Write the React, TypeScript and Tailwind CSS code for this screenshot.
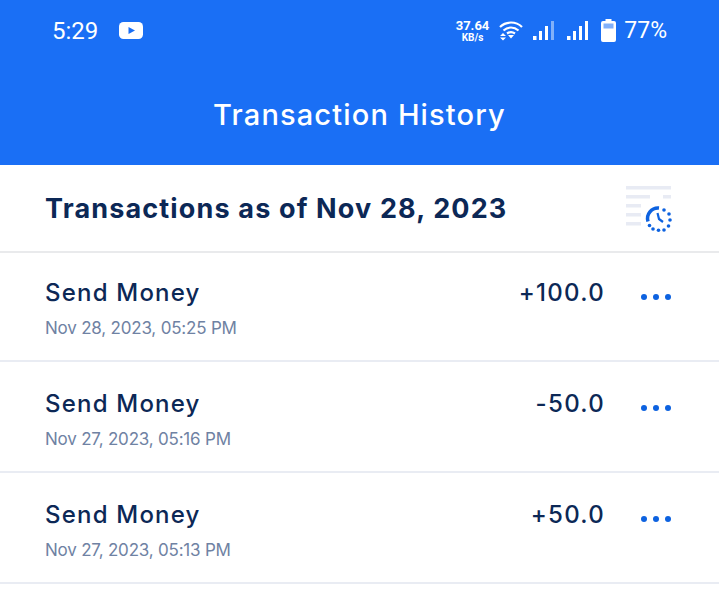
import clsx from "clsx";

const rows = [
  { date: "Nov 28, 2023, 05:25 PM", amount: "+100.0" },
  { date: "Nov 27, 2023, 05:16 PM", amount: "-50.0" },
  { date: "Nov 27, 2023, 05:13 PM", amount: "+50.0" },
];

function Signal({ dim }: { dim?: boolean }) {
  return (
    <svg width="22" height="20" viewBox="0 0 22 20" fill="#fff">
      <rect x="0" y="15" width="3.500" height="4" />
      <rect x="6" y="10" width="3" height="9" />
      <rect x="12" y="5" width="3" height="14" />
      <rect x="18" y="0" width="3" height="19" opacity={dim ? 0.45 : 1} />
    </svg>
  );
}

function Wifi() {
  return (
    <svg width="24" height="20" viewBox="0 0 24 20" fill="none" stroke="#fff" strokeWidth="2.200">
      <path d="M1 6 C7 0 17 0 23 6" />
      <path d="M4.500 9.500 C9 5.500 15 5.500 19.500 9.500" />
      <path d="M8 12.500 C10.500 10.800 13.500 10.800 16 12.500" />
      <path d="M1 15 L4 12 L7 15 Z M1 16.500 L4 19.500 L7 16.500 Z" fill="#fff" stroke="none" />
      <path d="M9 14 L12 17.500 L15 14 Z" fill="#fff" stroke="none" />
    </svg>
  );
}

function HistoryIcon() {
  return (
    <svg width="48" height="48" viewBox="0 0 48 48" className="shrink-0">
      <g fill="#e8ebf4">
        <rect x="2" y="2" width="45" height="3.500" />
        <rect x="2" y="11" width="24" height="3.500" />
        <rect x="39" y="11" width="8" height="3.500" />
        <rect x="2" y="20" width="15" height="3.500" />
        <rect x="2" y="29" width="15" height="3.500" />
        <rect x="2" y="38" width="15" height="3.500" />
      </g>
      <path d="M24 37.500 A10.500 10.500 0 0 1 35 24" fill="none" stroke="#0d62e0" strokeWidth="3.500" />
      <path d="M33.500 29 L35 35 L39 38" fill="none" stroke="#0d62e0" strokeWidth="2.200" />
      <g fill="#0d62e0">
        <circle cx="40" cy="26" r="1.800" />
        <circle cx="45" cy="30" r="1.800" />
        <circle cx="46" cy="36" r="1.800" />
        <circle cx="44.500" cy="42" r="1.800" />
        <circle cx="40" cy="46" r="1.800" />
        <circle cx="34.500" cy="46.200" r="1.800" />
        <circle cx="29" cy="45" r="1.800" />
        <circle cx="25.500" cy="41.500" r="1.800" />
      </g>
    </svg>
  );
}

export default function App() {
  return (
    <div className="h-[592px] w-[719px] overflow-hidden bg-white font-['Inter','Noto_Sans',sans-serif]">
      <header className="h-[165px] bg-[#1a6ff5] text-white">
        <div className="flex h-[61px] items-center justify-between pl-[52px] pr-[52px]">
          <div className="flex items-center gap-[21px]">
            <span className="font-['Roboto',sans-serif] text-[24px] leading-none">5:29</span>
            <svg width="24" height="17" viewBox="0 0 24 17">
              <rect width="24" height="17" rx="4.500" fill="#fff" />
              <path d="M9.500 5 L16 8.500 L9.500 12 Z" fill="#1a6ff5" />
            </svg>
          </div>
          <div className="flex items-center gap-[10px] font-['Roboto',sans-serif]">
            <div className="flex flex-col items-center text-[13px] font-bold leading-[14px]">
              <span>37.64</span>
              <span className="text-[10px] leading-[10px]">KB/s</span>
            </div>
            <Wifi />
            <div className="flex items-center gap-3">
              <Signal dim />
              <Signal />
            </div>
            <div className="ml-[2px] flex items-center gap-[8px]">
              <svg width="15" height="23" viewBox="0 0 15 23" fill="#fff">
                <path d="M4.500 0 H10.500 V2 H13 a2 2 0 0 1 2 2 V21 a2 2 0 0 1 -2 2 H2 a2 2 0 0 1 -2 -2 V4 a2 2 0 0 1 2 -2 H4.500 Z" />
                <rect x="2.500" y="4.500" width="10" height="5" fill="#1a6ff5" opacity="0.55" />
              </svg>
              <span className="text-[23px] leading-none">77%</span>
            </div>
          </div>
        </div>
        <h1 className="mt-[34px] text-center text-[29px] font-medium leading-[40px] tracking-[1.15px]">
          Transaction History
        </h1>
      </header>

      <div className="flex h-[88px] items-center justify-between border-b-2 border-[#e9eaec] pl-[45px] pr-[47px]">
        <h2 className="mt-[3px] text-[27px] font-bold tracking-[1.15px] text-[#0c2856]">Transactions as of Nov 28, 2023</h2>
        <HistoryIcon />
      </div>

      {rows.map((row, i) => (
        <div
          key={row.date}
          className={clsx(
            "flex justify-between border-b-2 border-[#e9ecf3] pl-[45px] pr-[48px]",
            i === 0 ? "h-[109px] pt-[24px]" : "h-[111px] pt-[26px]",
          )}
        >
          <div>
            <div className="text-[24px] font-medium leading-[32px] tracking-[1.2px] text-[#0c2856]">Send Money</div>
            <div className="mt-[7px] text-[17px] leading-[24px] tracking-[-0.2px] text-[#6f82a3]">{row.date}</div>
          </div>
          <div className="flex items-start">
            <span className="text-[24px] font-medium leading-[32px] tracking-[1.3px] text-[#0c2856]">{row.amount}</span>
            <span className="ml-[36px] mt-[17px] flex gap-[6px]">
              <i className="h-[6px] w-[6px] rounded-full bg-[#0d62e0]" />
              <i className="h-[6px] w-[6px] rounded-full bg-[#0d62e0]" />
              <i className="h-[6px] w-[6px] rounded-full bg-[#0d62e0]" />
            </span>
          </div>
        </div>
      ))}
    </div>
  );
}
